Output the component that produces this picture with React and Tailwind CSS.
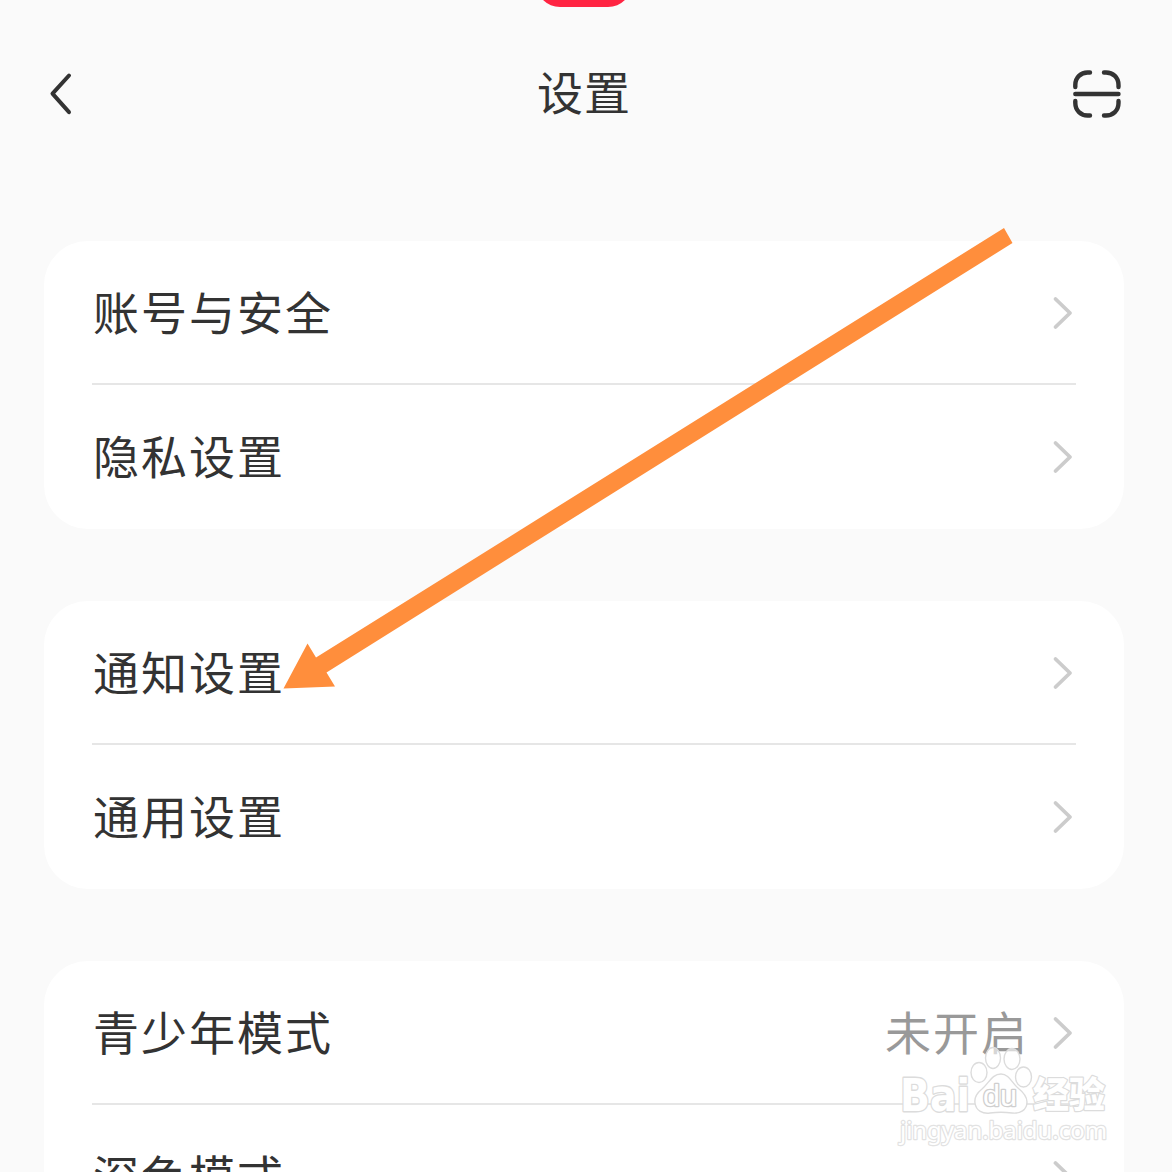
const GROUPS = [
  [{ label: '账号与安全' }, { label: '隐私设置' }],
  [{ label: '通知设置' }, { label: '通用设置' }],
  [{ label: '青少年模式', value: '未开启' }, { label: '深色模式' }],
]

function BackIcon() {
  return (
    <svg className="h-12 w-7" viewBox="0 0 28 48" fill="none" stroke="#333333" strokeWidth="4" strokeLinecap="round" strokeLinejoin="round">
      <path d="M21 5.500 4.500 23.700l16.500 18.500" />
    </svg>
  )
}

function ScanIcon() {
  return (
    <svg className="size-12" viewBox="0 0 48 48" fill="none" stroke="#333333" strokeWidth="4.400" strokeLinecap="round">
      <path d="M2.300 17V15C2.300 7.500 8 2.500 14.500 2.500H17" />
      <path d="M31 2.500h2c7 0 12.500 5 12.500 12.500v2" />
      <path d="M45.500 31v2c0 7.500-5.500 12.500-12.500 12.500h-2" />
      <path d="M17 45.500h-2.500C8 45.500 2.300 40.500 2.300 33v-2" />
      <path d="M2.300 24H45.500" />
    </svg>
  )
}

function Chevron() {
  return (
    <svg className="h-9 w-6" viewBox="0 0 24 36" fill="none" stroke="#cccccc" strokeWidth="3.800" strokeLinecap="round" strokeLinejoin="round">
      <path d="M4.500 4 19 18 4.500 32" />
    </svg>
  )
}

function Row({ label, value }) {
  return (
    <div className="flex h-36 items-center border-b-2 border-[#e6e6e6] pt-[2px] pr-px pl-px last:border-b-0 last:pt-0">
      <span className="mb-1.5 flex-1 text-[46px] leading-[68px] tracking-[2px] text-[#333333]">{label}</span>
      {value && <span className="mr-[22px] mb-1.5 text-[46px] leading-[68px] tracking-[2px] text-[#999999]">{value}</span>}
      <Chevron />
    </div>
  )
}

function Group({ rows }) {
  return (
    <section className="rounded-[44px] bg-white px-12">
      {rows.map((row) => (
        <Row key={row.label} {...row} />
      ))}
    </section>
  )
}

function PointerArrow() {
  return (
    <svg className="absolute top-[220px] left-[275px] h-[480px] w-[750px]" viewBox="275 220 750 480">
      <path d="M1004 228 1012.500 243 326.500 672.500 335 686.500 283.500 688.500 307.500 643.500 316 657.500Z" fill="#ff8e3c" />
    </svg>
  )
}

function Watermark() {
  return (
    <svg
      className="absolute top-[1040px] left-[890px] h-[112px] w-[230px]"
      viewBox="890 1040 230 112"
      fill="#ffffff"
      stroke="#dcdcdc"
      strokeWidth="1.400"
      strokeLinejoin="round"
    >
      <text x="900" y="1111" fontFamily="DejaVu Sans" fontWeight="700" fontSize="45" textLength="70" lengthAdjust="spacingAndGlyphs" strokeWidth="2.800" paintOrder="stroke">Bai</text>
      <ellipse cx="979" cy="1072.500" rx="8" ry="10" />
      <ellipse cx="993" cy="1058" rx="7.500" ry="10.500" fillOpacity="0.6" />
      <ellipse cx="1012" cy="1059" rx="8" ry="10.500" fillOpacity="0.6" />
      <ellipse cx="1023.500" cy="1077" rx="8" ry="10" />
      <path d="M1001 1074c-9 0-12 9-19 15-5 4-8 8-7 14 1 8 8 11 15 10 8-1 14-1 22 0 8 1 15-3 15-11 0-6-4-10-9-14-6-5-9-14-17-14Z" />
      <text x="983" y="1106" fontFamily="Liberation Sans" fontSize="29" textLength="34" lengthAdjust="spacingAndGlyphs" stroke="#cfcfcf" strokeWidth="2.600" paintOrder="stroke">du</text>
      <text x="1033" y="1108" fontFamily="Noto Sans CJK SC" fontWeight="900" fontSize="36" textLength="72" strokeWidth="2.400" paintOrder="stroke">经验</text>
      <text x="900" y="1139" fontFamily="Noto Sans" fontSize="24" textLength="207" lengthAdjust="spacingAndGlyphs" stroke="#e2e2e2" strokeWidth="2.400" paintOrder="stroke">jingyan.baidu.com</text>
    </svg>
  )
}

export default function App() {
  return (
    <div className="relative h-[1172px] w-[1172px] overflow-hidden bg-[#fafafa] font-['Noto_Sans_CJK_SC',sans-serif]">
      <div className="absolute -top-[41px] left-[536px] h-12 w-24 rounded-full bg-[#ff2442]" />
      <header className="flex h-[188px] items-center justify-between pr-[51px] pl-[48px]">
        <BackIcon />
        <h1 className="mb-2 ml-[19px] text-[46px] leading-[68px] tracking-[1px] text-[#333333]">设置</h1>
        <ScanIcon />
      </header>
      <main className="mt-[53px] mr-[48px] ml-[44px] flex flex-col gap-[72px]">
        {GROUPS.map((rows) => (
          <Group key={rows[0].label} rows={rows} />
        ))}
      </main>
      <PointerArrow />
      <Watermark />
    </div>
  )
}
